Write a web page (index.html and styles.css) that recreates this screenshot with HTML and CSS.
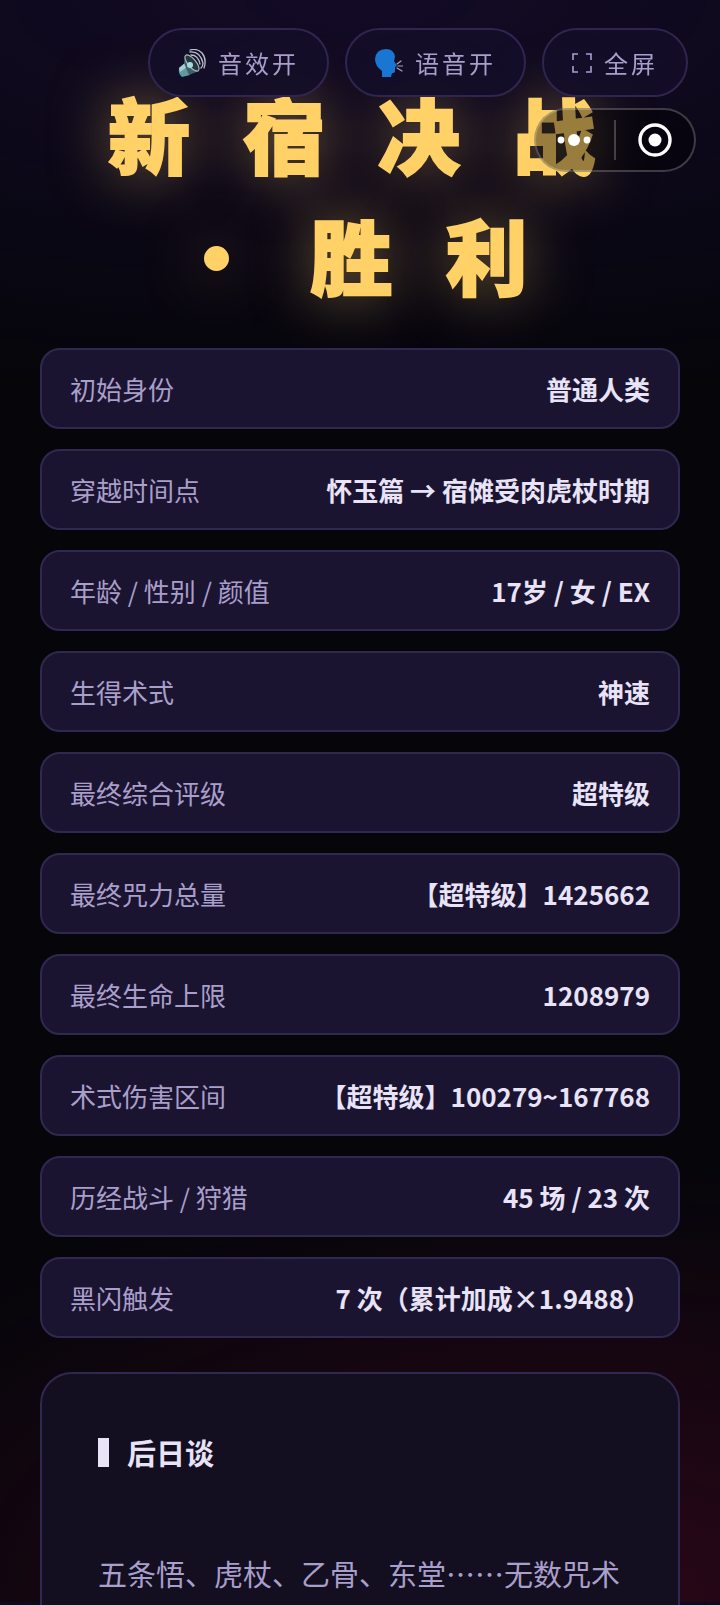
FILE: index.html
```html
<!DOCTYPE html>
<html lang="zh-CN">
<head>
  <meta charset="UTF-8" />
  <meta name="viewport" content="width=device-width, initial-scale=1.0" />
  <title>新宿决战·胜利</title>
  <link rel="stylesheet" href="styles.css">
</head>
<body>

  <!-- Top buttons -->
  <div class="toolbar">
    <button class="tool-btn" type="button">
      <svg class="tool-icon" viewBox="0 0 28 28" aria-hidden="true">
        <path d="M1 19 L7 14 L12 26 L4 28 Q0 25 1 19 Z" fill="#5f9aa3" />
        <path d="M1 19 L7 14 L9 18 L2 23 Z" fill="#a5cdd2" />
        <path d="M6 14 L7 7 Q16 9 21 22 L11 26 Z" fill="#3f6066" />
        <ellipse cx="14" cy="14" rx="4" ry="10" transform="rotate(-40 14 14)" fill="#27383d" stroke="#a9bdc0" stroke-width="1.2" />
        <circle cx="12" cy="16" r="3" fill="#a5dbe0" />
        <path d="M13 6 Q20 6 22 15 M12 3 Q22 2 25 14 Q25 17 23 19 M12 1 Q19 -1 24 4 Q29 10 26 19" fill="none" stroke="#b9bfc8" stroke-width="1.3" stroke-linecap="round" />
      </svg>
      <span>音效开</span>
    </button>
    <button class="tool-btn" type="button">
      <svg class="tool-icon" viewBox="0 0 28 28" aria-hidden="true">
        <path d="M7 28 V22 Q0 17 0 10 Q1 0 11 0 Q19 0 20 8 L19 12 L22 17 L20 18 V22 Q20 24 17 24 L16 28 Z" fill="#1976d2" />
        <path d="M22 15 L26 12 M23 17 H28 M22 19 L27 22" stroke="#a9a4b8" stroke-width="1.2" stroke-linecap="round" />
      </svg>
      <span>语音开</span>
    </button>
    <button class="tool-btn" type="button">
      <svg class="full-icon" viewBox="0 0 20 20" aria-hidden="true">
        <path d="M1 7 V1 H6 M14 1 H19 V7 M19 13 V19 H14 M6 19 H1 V13" fill="none" stroke="#aaa0cc" stroke-width="1.6" />
      </svg>
      <span>全屏</span>
    </button>
  </div>

  <!-- Mini program capsule -->
  <div class="capsule">
    <button class="capsule-btn" type="button" aria-label="更多">
      <svg viewBox="0 0 40 40" aria-hidden="true">
        <circle cx="6" cy="20" r="3.4" fill="#fff" />
        <circle cx="19" cy="20" r="6" fill="#fff" />
        <circle cx="32" cy="20" r="3.4" fill="#fff" />
      </svg>
    </button>
    <button class="capsule-btn" type="button" aria-label="关闭">
      <svg viewBox="0 0 40 40" aria-hidden="true">
        <circle cx="20" cy="20" r="15" fill="none" stroke="#fff" stroke-width="3.4" />
        <circle cx="20" cy="20" r="6.5" fill="#fff" />
      </svg>
    </button>
  </div>

  <main class="ending">
    <h1 class="title">新宿决战·胜利</h1>

    <dl class="stats">
      <div class="stat"><dt>初始身份</dt><dd>普通人类</dd></div>
      <div class="stat"><dt>穿越时间点</dt><dd>怀玉篇 → 宿傩受肉虎杖时期</dd></div>
      <div class="stat"><dt>年龄 / 性别 / 颜值</dt><dd>17岁 / 女 / EX</dd></div>
      <div class="stat"><dt>生得术式</dt><dd>神速</dd></div>
      <div class="stat"><dt>最终综合评级</dt><dd>超特级</dd></div>
      <div class="stat"><dt>最终咒力总量</dt><dd>【超特级】1425662</dd></div>
      <div class="stat"><dt>最终生命上限</dt><dd>1208979</dd></div>
      <div class="stat"><dt>术式伤害区间</dt><dd>【超特级】100279~167768</dd></div>
      <div class="stat"><dt>历经战斗 / 狩猎</dt><dd>45 场 / 23 次</dd></div>
      <div class="stat"><dt>黑闪触发</dt><dd>7 次（累计加成×1.9488）</dd></div>
    </dl>

    <section class="story">
      <h2>后日谈</h2>
      <p>五条悟、虎杖、乙骨、东堂……无数咒术</p>
    </section>
  </main>

</body>
</html>
```
FILE: styles.css
```css
* { box-sizing: border-box; }

body {
  margin: 0;
  height: 100vh;
  overflow: hidden;
  font-family: "Noto Sans CJK SC", sans-serif;
  color: #e8e3f7;
  background:
    radial-gradient(ellipse 160% 25% at 50% 0, #130b26, transparent),
    radial-gradient(ellipse 120% 28% at 80% 100%, #2a0719, transparent),
    #05050a;
  background-size: 100% calc(100vh - 3px);
}

button {
  font-family: inherit;
  cursor: pointer;
}

.toolbar {
  position: fixed;
  top: 28px;
  right: 32px;
  z-index: 2;
  display: flex;
  gap: 16px;
}

.tool-btn {
  display: flex;
  align-items: center;
  gap: 12px;
  padding: 16px 28px;
  border: 2px solid #30254f;
  border-radius: 35px;
  background: rgba(20, 13, 40, 0.9);
  color: #a99fcb;
  font-size: 24px;
  line-height: 33px;
  letter-spacing: 3px;
}

.tool-icon {
  width: 28px;
  height: 28px;
}

.full-icon {
  width: 20px;
  height: 20px;
}

.capsule {
  position: fixed;
  top: 108px;
  right: 24px;
  z-index: 3;
  display: flex;
  align-items: center;
  width: 162px;
  height: 64px;
  border: 2px solid rgba(255, 255, 255, 0.22);
  border-radius: 32px;
  background: rgba(0, 0, 0, 0.4);
}

.capsule-btn {
  flex: 1;
  height: 40px;
  padding: 0;
  border: none;
  background: none;
}

.capsule-btn + .capsule-btn { border-left: 2px solid rgba(255, 255, 255, 0.22); }

.capsule-btn svg {
  display: block;
  width: 40px;
  height: 40px;
  margin: 0 auto;
}

.ending { padding: 72px 40px 0; }

.title {
  margin: 0 0 34px;
  padding-left: 36px;
  color: #ffd166;
  font-size: 82px;
  font-weight: 900;
  line-height: 121px;
  letter-spacing: 53px;
  text-align: center;
  text-shadow: 0 0 60px rgba(255, 209, 102, 0.5);
  -webkit-text-stroke: 2px #ffd166;
}

.stats {
  display: grid;
  gap: 20px;
  margin: 0;
}

.stat {
  display: flex;
  justify-content: space-between;
  padding: 20px 28px;
  border: 2px solid #30284f;
  border-radius: 20px;
  background: #1b1430;
  font-size: 26px;
  line-height: 37px;
}

.stat dt { color: #a99fcb; }

.stat dd {
  margin: 0;
  font-weight: 700;
}

.story {
  margin-top: 34px;
  padding: 48px 56px;
  border: 2px solid #30284f;
  border-radius: 32px;
  background: #130f20;
  font-size: 29px;
  line-height: 61px;
}

.story h2 {
  display: flex;
  align-items: center;
  gap: 18px;
  margin: 0 0 60px;
  font-size: 29px;
}

.story h2::before {
  content: "";
  width: 11px;
  height: 29px;
  background: #e8e3f7;
}

.story p {
  margin: 0;
  color: #a99fcb;
}
```
